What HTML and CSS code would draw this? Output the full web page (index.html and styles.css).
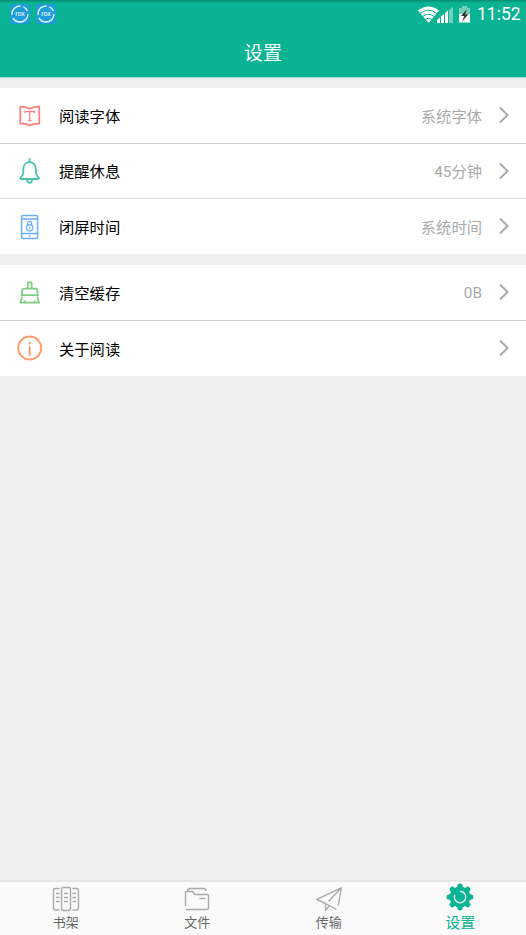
FILE: index.html
```html
<!DOCTYPE html>
<html lang="zh-CN">
<head>
<meta charset="utf-8">
<title>设置</title>
<link rel="stylesheet" href="styles.css">
</head>
<body>
<div class="app">
  <header class="header">
    <div class="status">
      <svg class="badge" viewBox="0 0 20 20"><rect width="20" height="20" rx="3" fill="#1d9edb"/><circle cx="10" cy="10" r="8" fill="none" stroke="#e9f8ff" stroke-width="1.400" stroke-dasharray="21 3 14 3 6 3.300"/><text x="10" y="12" class="badge-text">rox</text></svg>
      <svg class="badge" viewBox="0 0 20 20"><rect width="20" height="20" rx="3" fill="#1d9edb"/><circle cx="10" cy="10" r="8" fill="none" stroke="#e9f8ff" stroke-width="1.400" stroke-dasharray="21 3 14 3 6 3.300"/><text x="10" y="12" class="badge-text">rox</text></svg>
      <svg class="signals" viewBox="0 0 56 20">
        <path d="M0 5.500Q10.500-2.500 21 5.500L10.500 18Z" fill="#fff"/>
        <g fill="none" stroke="#0ab393" stroke-width="1"><path d="M2 8.600Q10.500 1.800 19 8.600M4.500 11.700Q10.500 6.800 16.500 11.700M7 14.600Q10.500 11.600 14 14.600"/></g>
        <path d="M19 18v-3l3-2.500V18zM23 18v-6.500l3-2.500v9zM27 18V8l3-2.500V18z" fill="#fff"/>
        <path d="M31 18V5l4-3.500V18z" fill="#75cfbd"/>
        <path d="M41 3h3V1h5v2h3v6H41z" fill="#75cfbd"/><path d="M41 9h11v8.500H41z" fill="#fff"/>
        <path d="M49 4l-6 7h3.200l-2 5.500 6.200-7.300h-3.200z" fill="#303b39"/>
      </svg>
      <span class="clock">11:52</span>
    </div>
    <h1 class="title">设置</h1>
  </header>

  <main class="content">
    <section class="group">
      <div class="row">
        <svg class="icon book" viewBox="0 0 26 27"><path d="M3.300 4.700Q8 4.600 12.700 6.800Q17.500 4.600 22.300 4.700V21.500Q17 21.300 12.700 23.500Q8.500 21.300 3.300 21.500Z"/><path class="thin" d="M8 10.500V9.500h9.500v1M12.700 9.500v9M11.500 18.500h2.400"/></svg>
        <span class="label">阅读字体</span><span class="value">系统字体</span>
        <svg class="chevron" viewBox="0 0 12 18"><path d="M2 1.500 9.500 9 2 16.500"/></svg>
      </div>
      <div class="row">
        <svg class="icon bell" viewBox="0 0 26 27"><path d="M12.600 1v3.200M12.600 4.200C8.500 4.200 6.300 7.300 6.300 11.200V15C6.300 18 3.200 18.500 3.200 20.500Q3.200 21 4.200 21H21Q22 21 22 20.500C22 18.500 18.900 18 18.900 15V11.200C18.900 7.300 16.700 4.200 12.600 4.200M10.200 22.200Q10.200 24.800 12.600 24.800Q15 24.800 15 22.200"/></svg>
        <span class="label">提醒休息</span><span class="value">45分钟</span>
        <svg class="chevron" viewBox="0 0 12 18"><path d="M2 1.500 9.500 9 2 16.500"/></svg>
      </div>
      <div class="row">
        <svg class="icon phone" viewBox="0 0 26 27"><rect x="4.600" y="2.500" width="16" height="23" rx="1.500"/><path d="M4.600 5.900h16M4.600 20.600h16M12.200 23.100h.8"/><g class="thin"><circle cx="12.600" cy="14.800" r="3.200"/><path d="M10.600 12.300v-2a2 2 0 0 1 4 0v2M12.600 14v1.800"/></g></svg>
        <span class="label">闭屏时间</span><span class="value">系统时间</span>
        <svg class="chevron" viewBox="0 0 12 18"><path d="M2 1.500 9.500 9 2 16.500"/></svg>
      </div>
    </section>
    <section class="group">
      <div class="row">
        <svg class="icon brush" viewBox="0 0 26 27"><path d="M10.700 9.700V5.200a2 2 0 0 1 4 0v4.500M4.900 15.700V12Q5 9.700 7.200 9.700h11Q20.400 9.700 20.500 12v3.700M4.500 16.200h16.400M4.900 18Q4.500 21.500 3.200 23.700h19Q20.900 21.500 20.500 18M8 23v-1M17.500 23v-1"/></svg>
        <span class="label">清空缓存</span><span class="value size">0B</span>
        <svg class="chevron" viewBox="0 0 12 18"><path d="M2 1.500 9.500 9 2 16.500"/></svg>
      </div>
      <div class="row">
        <svg class="icon info" viewBox="0 0 26 27"><circle cx="12.700" cy="13" r="11.500"/><path d="M12.700 7.300v1.200M12.700 12v8"/></svg>
        <span class="label">关于阅读</span><span class="value"></span>
        <svg class="chevron" viewBox="0 0 12 18"><path d="M2 1.500 9.500 9 2 16.500"/></svg>
      </div>
    </section>
  </main>

  <nav class="tabs">
    <div class="tab">
      <svg class="tab-icon" viewBox="0 0 28 28"><rect x="9.500" y="3.500" width="9" height="23" rx="1.500"/><path d="M7.500 4.500H3.500Q1.500 4.500 1.500 6.500V24Q1.500 26 3.500 26H7.500M20.500 4.500h4Q26.500 4.500 26.500 6.500V24Q26.500 26 24.500 26h-4M4 9.500h3.500M4 13.500h3.500M4 17.500h3.500M12 9.500h4M12 13.500h4M12 17.500h4M20.500 9.500H24M20.500 13.500H24M20.500 17.500H24"/></svg>
      <span>书架</span>
    </div>
    <div class="tab">
      <svg class="tab-icon" viewBox="0 0 28 28"><path d="M2.500 22V8.500Q2.500 7.500 3.500 7.500H9.500L12 10.500H24.500Q25.500 10.500 25.500 11.500V23.500Q25.500 25.500 23.500 25.500H2.500M4.500 7.500Q4.500 4.500 7 4.500H21Q23 4.500 23 7M16.500 14.500h6"/></svg>
      <span>文件</span>
    </div>
    <div class="tab">
      <svg class="tab-icon" viewBox="0 0 28 28"><path d="M21.500 25.500 10.500 19.500V26.500L14.500 21.500M10.500 19.500 1.800 15.300 26.300 3.800 23.300 21.500M26.300 3.800 13.500 17.500"/></svg>
      <span>传输</span>
    </div>
    <div class="tab active">
      <svg class="tab-icon" viewBox="0 0 28 28"><g class="gear"><circle cx="14" cy="14" r="10.400"/><path d="M14 3.300v21.400M3.300 14h21.400M6.300 6.300l15.400 15.400M21.700 6.300 6.300 21.700"/></g><path class="dial" d="M14 8.300A5.700 5.700 0 1 1 8.800 11.700"/></svg>
      <span>设置</span>
    </div>
  </nav>
</div>
</body>
</html>
```
FILE: styles.css
```css
* { box-sizing: border-box; }
body { margin: 0; font-family: Roboto, "Noto Sans CJK SC", sans-serif; }
.app { display: flex; flex-direction: column; height: 935px; background: #efefef; }
.header { height: 77px; background: #0ab393; color: #fff; box-shadow: 0 1px #a5ddd2; }
.status { display: flex; align-items: center; height: 28px; padding: 0 6px 0 10px; gap: 6px; background: linear-gradient(#078b72, #0ab393 3px); }
.badge { width: 20px; height: 20px; }
.badge-text { font: 7px Roboto, sans-serif; fill: #fff; text-anchor: middle; }
.signals { width: 56px; height: 20px; margin: 2px -3px 0 auto; }
.clock { font-size: 17.500px; line-height: 28px; width: 43px; white-space: nowrap; }
.title { margin: 0; font-size: 19px; font-weight: 400; line-height: 51px; text-align: center; }
.content { flex: 1; padding-top: 11px; }
.group { margin-bottom: 11px; background: #fff; }
.row { display: flex; align-items: center; height: 55px; padding: 0 16px 0 17px; font-size: 15.300px; }
.row + .row { height: 56px; border-top: 1px solid #d0d0d0; }
.group:first-child .row:last-child { height: 56px; border-top-color: #dedede; }
.group:first-child .row:nth-child(2) { height: 55px; }
.icon { width: 26px; height: 27px; margin-right: 16px; fill: none; stroke-width: 1.500; stroke-linecap: round; stroke-linejoin: round; }
.book { stroke: #f98280; stroke-width: 1.800; }
.bell { stroke: #49c5ad; stroke-width: 1.800; }
.phone { stroke: #6caef5; stroke-width: 1.500; }
.brush { stroke: #7ccd81; stroke-width: 1.700; }
.info { stroke: #ff9b68; stroke-width: 1.900; }
.thin { stroke-width: 1.300; }
.label { color: #000; padding-bottom: 2px; }
.value { margin-left: auto; padding-bottom: 2px; color: #aaa; }
.size { padding-bottom: 0; }
.chevron { width: 12px; height: 18px; margin: 0 0 1px 16px; fill: none; stroke: #aaa; stroke-width: 2; }
.tabs { display: flex; height: 55px; background: #fafafa; border-top: 2px solid #e6e6e6; }
.tab { flex: 1; display: flex; flex-direction: column; align-items: center; padding-top: 2px; color: #666; font-size: 13px; line-height: 22px; }
.tab-icon { width: 28px; height: 28px; fill: none; stroke: #aaa; stroke-width: 1.400; stroke-linejoin: round; }
.active { padding-top: 1px; color: #0ab393; font-size: 15px; line-height: 24px; }
.gear { fill: #0ab393; stroke: #0ab393; stroke-width: 5.400; stroke-linecap: round; }
.gear circle { stroke: none; }
.dial { stroke: #d8f2ed; stroke-width: 1.500; }
```
